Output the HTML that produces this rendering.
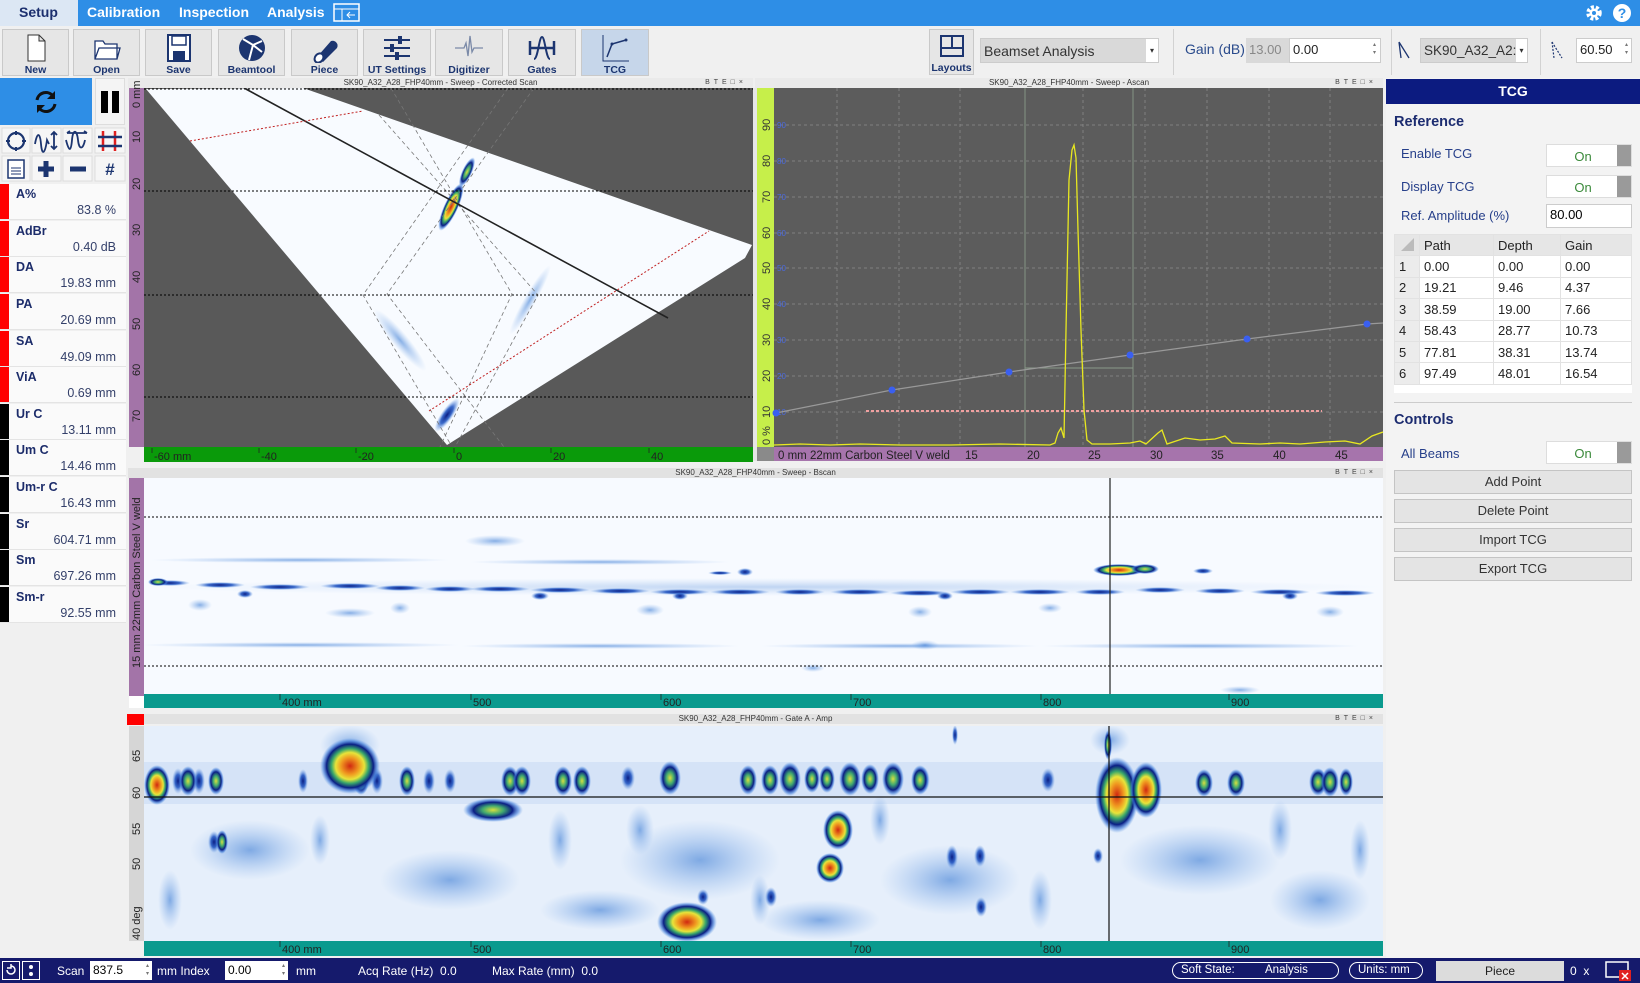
<!DOCTYPE html>
<html><head><meta charset="utf-8">
<style>
*{box-sizing:border-box;margin:0;padding:0}
body{width:1640px;height:983px;overflow:hidden;background:#f0f0f0;font-family:"Liberation Sans",sans-serif;position:relative}
.a{position:absolute}
.menu{left:0;top:0;width:1640px;height:26px;background:#2e8ee6}
.menu span{position:absolute;top:4px;font-size:14px;font-weight:bold;color:#fff}
.tb{background:#e6e6e6;border:1px solid #c9c9c9;top:29px;height:47px;width:67px;text-align:center;font-size:10.5px;font-weight:bold;color:#1c3570}
.tb svg{display:block;margin:3px auto 1px}
.tb.act{background:#c6d6ea}
.lbl{font-size:13px;color:#2a4b8c}
.rd{left:0;width:126px;height:36px;background:#fafafa;border-bottom:1px solid #e4e4e4}
.rd i{position:absolute;left:0;top:0;width:9px;height:35px}
.rd b{position:absolute;left:16px;top:3px;font-size:12.5px;color:#1c2c6a}
.rd s{position:absolute;right:10px;top:19px;font-size:12.5px;color:#34406a;text-decoration:none}
.ttl{height:10px;font-size:8px;color:#333;text-align:center;line-height:10px;background:#eaeaea}
.ttl em{position:absolute;right:6px;top:0;font-style:normal;font-size:7px;letter-spacing:4px;color:#444}
.rp{font-size:13px;color:#263f8a}
.tog{left:1546px;width:86px;height:23px;background:#fff;border:1px solid #ddd}
.tog span{position:absolute;left:0;width:72px;text-align:center;top:4px;font-size:13px;color:#3b8a3b}
.tog i{position:absolute;right:0;top:0;width:14px;height:21px;background:#9a9a9a}
.btn{left:1394px;width:238px;height:24px;background:#e4e4e4;border:1px solid #c4c4c4;text-align:center;font-size:13px;line-height:22px;color:#333}
table{border-collapse:collapse;font-size:13px;color:#222}
td{border:1px solid #e2e2e2;height:21.4px;padding-left:4px;background:#fff}
.sb{font-size:12px;color:#fff}
</style></head><body>
<div class="a menu">
<div class="a" style="left:0;top:0;width:78px;height:26px;background:#dce7f4"></div>
<span style="left:19px;color:#1c2f6e">Setup</span>
<span style="left:87px">Calibration</span><span style="left:179px">Inspection</span><span style="left:267px">Analysis</span>
<svg class="a" style="left:333px;top:3px" width="28" height="20"><rect x="1" y="1" width="25" height="17" fill="none" stroke="#fff" stroke-width="1.5"/><line x1="1" y1="6" x2="26" y2="6" stroke="#fff"/><line x1="9" y1="6" x2="9" y2="18" stroke="#fff"/><path d="M22 12h-8m3-3l-3 3 3 3" stroke="#fff" fill="none"/></svg>
<svg class="a" style="left:1584px;top:3px" width="20" height="20"><circle cx="10" cy="10" r="6" fill="none" stroke="#fff" stroke-width="3.5" stroke-dasharray="3 2"/><circle cx="10" cy="10" r="4.5" fill="#fff"/><circle cx="10" cy="10" r="2" fill="#2e8ee6"/></svg>
<svg class="a" style="left:1612px;top:3px" width="20" height="20"><circle cx="10" cy="10" r="9" fill="#fff"/><text x="10" y="15" font-size="14" font-weight="bold" text-anchor="middle" fill="#2e8ee6" font-family="Liberation Sans">?</text></svg>
</div>

<div class="a tb" style="left:2px"><svg width="26" height="30"><path d="M5 2h11l6 6v20H5z M16 2v6h6" fill="#fff" stroke="#333"/></svg>New</div>
<div class="a tb" style="left:73px"><svg width="30" height="30"><path d="M3 8h8l2 3h12v15H3z M3 26l4-11h21l-3 11" fill="#fff" stroke="#1c3570" stroke-width="1.3"/></svg>Open</div>
<div class="a tb" style="left:145px"><svg width="28" height="30"><rect x="3" y="2" width="22" height="26" fill="#fff" stroke="#1c3570" stroke-width="2"/><rect x="7" y="3" width="14" height="9" fill="none" stroke="#1c3570" stroke-width="1.5"/><rect x="8" y="18" width="12" height="9" fill="#1c3570"/></svg>Save</div>
<div class="a tb" style="left:218px"><svg width="32" height="30"><circle cx="16" cy="15" r="13" fill="#1c3570"/><path d="M7 6l10 6 9-4M17 12l-4 15M17 12l9 7" stroke="#fff" stroke-width="2" fill="none"/></svg>Beamtool</div>
<div class="a tb" style="left:291px"><svg width="32" height="30"><path d="M8 24l14-16a5 5 0 0 1 6 7L14 29z" fill="#1c3570"/><ellipse cx="10" cy="25" rx="4" ry="5" fill="#fff" stroke="#1c3570" stroke-width="2" transform="rotate(40 10 25)"/></svg>Piece</div>
<div class="a tb" style="left:363px;width:68px"><svg width="32" height="30"><path d="M3 7h26M3 15h26M3 23h26" stroke="#1c3570" stroke-width="2"/><rect x="17" y="3" width="4" height="8" fill="#1c3570"/><rect x="9" y="11" width="4" height="8" fill="#1c3570"/><rect x="14" y="19" width="4" height="8" fill="#1c3570"/></svg>UT Settings</div>
<div class="a tb" style="left:435px;width:68px"><svg width="32" height="30"><path d="M2 15h9l2-5 2 13 2-20 2 16 2-4h9" stroke="#7b8aa8" stroke-width="1.3" fill="none"/></svg>Digitizer</div>
<div class="a tb" style="left:508px;width:68px"><svg width="32" height="30"><path d="M4 8v14M28 8v14M4 15h24" stroke="#1c3570" stroke-width="2.5"/><path d="M8 26c4 0 5-22 8-22s4 22 8 22" stroke="#1c3570" stroke-width="2" fill="none"/></svg>Gates</div>
<div class="a tb act" style="left:581px;width:68px"><svg width="32" height="30"><path d="M4 2v26h26" stroke="#1c3570" fill="none"/><path d="M8 24l5-13 14-4" stroke="#1c3570" stroke-width="1.5" fill="none"/><circle cx="13" cy="11" r="1.5" fill="#1c3570"/><circle cx="27" cy="7" r="1.5" fill="#1c3570"/></svg>TCG</div>
<div class="a tb" style="left:929px;width:45px;top:29px;height:46px"><svg width="28" height="28"><rect x="3" y="3" width="22" height="20" fill="none" stroke="#1c3570" stroke-width="2"/><path d="M14 3v12M3 15h22" stroke="#1c3570" stroke-width="2"/></svg>Layouts</div>
<div class="a" style="left:980px;top:38px;width:179px;height:25px;background:#d9d9d9;border:1px solid #ccc;font-size:14px;color:#333;padding:4px 3px">Beamset Analysis<span style="position:absolute;right:0;top:0;width:12px;height:23px;background:#fff;font-size:8px;text-align:center;line-height:23px">▾</span></div>
<div class="a" style="left:1173px;top:29px;width:1px;height:46px;background:#d2d2d2"></div>
<div class="a lbl" style="left:1185px;top:41px;font-size:14px">Gain (dB)</div>
<div class="a" style="left:1246px;top:38px;width:43px;height:25px;background:#d9d9d9;font-size:13px;color:#888;padding:4px 3px">13.00</div>
<div class="a" style="left:1289px;top:38px;width:92px;height:25px;background:#fff;border:1px solid #ccc;font-size:13px;color:#222;padding:3px 3px">0.00<span style="position:absolute;right:4px;top:2px;font-size:6px;line-height:8px;color:#777">▴<br>▾</span></div>
<div class="a" style="left:1391px;top:29px;width:1px;height:46px;background:#d2d2d2"></div>
<svg class="a" style="left:1396px;top:40px" width="16" height="20"><path d="M3 2l2 16M3 2l10 16" stroke="#1c3570" stroke-width="1.3" fill="none"/></svg>
<div class="a" style="left:1420px;top:38px;width:108px;height:25px;background:#d9d9d9;border:1px solid #ccc;font-size:13.5px;color:#333;padding:4px 3px">SK90_A32_A2:<span style="position:absolute;right:0;top:0;width:11px;height:23px;background:#fff;font-size:8px;text-align:center;line-height:23px">▾</span></div>
<div class="a" style="left:1540px;top:29px;width:1px;height:46px;background:#d2d2d2"></div>
<svg class="a" style="left:1549px;top:40px" width="18" height="20"><path d="M3 2l2 16M3 2l10 16" stroke="#1c3570" stroke-width="1.2" fill="none" stroke-dasharray="2 1.5"/></svg>
<div class="a" style="left:1576px;top:38px;width:56px;height:25px;background:#fff;border:1px solid #ccc;font-size:13px;color:#222;padding:3px 3px">60.50<span style="position:absolute;right:3px;top:2px;font-size:6px;line-height:8px;color:#777">▴<br>▾</span></div>

<div class="a" style="left:0;top:78px;width:92px;height:47px;background:#2e8ee6"></div>
<svg class="a" style="left:31px;top:88px" width="30" height="28"><path d="M6 12a9 9 0 0 1 16-4" stroke="#111" stroke-width="3" fill="none"/><path d="M24 3v8h-8z" fill="#111"/><path d="M24 16a9 9 0 0 1-16 4" stroke="#111" stroke-width="3" fill="none"/><path d="M6 25v-8h8z" fill="#111"/></svg>
<div class="a" style="left:95px;top:78px;width:30px;height:47px;background:#f4f4f4;border:1px solid #ddd"></div>
<div class="a" style="left:101px;top:91px;width:7px;height:22px;background:#000"></div><div class="a" style="left:112px;top:91px;width:7px;height:22px;background:#000"></div>
<svg class="a" style="left:0;top:126px" width="128" height="58">
<g fill="#f6f6f6" stroke="#ddd"><rect x="2" y="2" width="28" height="25"/><rect x="32" y="2" width="29" height="25"/><rect x="63" y="2" width="29" height="25"/><rect x="95" y="2" width="30" height="25"/><rect x="2" y="30" width="28" height="25"/><rect x="32" y="30" width="29" height="25"/><rect x="63" y="30" width="29" height="25"/><rect x="95" y="30" width="30" height="25"/></g>
<circle cx="16" cy="15" r="8" fill="none" stroke="#1c3570" stroke-width="2.2"/><path d="M16 5v4M16 21v4M6 15h4M22 15h4" stroke="#1c3570" stroke-width="2"/>
<path d="M35 18c2-12 5-12 6 0s4 10 6-4l2 4M54 6v17M51 9l3-3 3 3M51 20l3 3 3-3" stroke="#1c3570" stroke-width="1.8" fill="none"/>
<path d="M66 14c3 12 5 12 6 0s5-10 6 0 5 10 7 0M67 7h20M67 7l3-2M87 7l-3-2" stroke="#1c3570" stroke-width="1.8" fill="none"/>
<path d="M103 5v20M115 5v20" stroke="#e02020" stroke-width="2.5"/><path d="M98 11h24M98 20h24" stroke="#1c3570" stroke-width="2.5"/>
<rect x="8" y="34" width="16" height="18" fill="#fff" stroke="#1c3570" stroke-width="1.5"/><path d="M11 42h10M11 45h10M11 48h10" stroke="#1c3570"/>
<path d="M46 35v16M38 43h16" stroke="#1c3570" stroke-width="5"/>
<path d="M70 43h16" stroke="#1c3570" stroke-width="5"/>
<text x="110" y="49" font-size="17" font-weight="bold" text-anchor="middle" fill="#1c3570" font-family="Liberation Sans">#</text>
</svg>
<div class="a rd" style="top:184px"><i style="background:#f00"></i><b>A%</b><s>83.8 %</s></div>
<div class="a rd" style="top:221px"><i style="background:#f00"></i><b>AdBr</b><s>0.40 dB</s></div>
<div class="a rd" style="top:257px"><i style="background:#f00"></i><b>DA</b><s>19.83 mm</s></div>
<div class="a rd" style="top:294px"><i style="background:#f00"></i><b>PA</b><s>20.69 mm</s></div>
<div class="a rd" style="top:331px"><i style="background:#f00"></i><b>SA</b><s>49.09 mm</s></div>
<div class="a rd" style="top:367px"><i style="background:#f00"></i><b>ViA</b><s>0.69 mm</s></div>
<div class="a rd" style="top:404px"><i style="background:#000"></i><b>Ur C</b><s>13.11 mm</s></div>
<div class="a rd" style="top:440px"><i style="background:#000"></i><b>Um C</b><s>14.46 mm</s></div>
<div class="a rd" style="top:477px"><i style="background:#000"></i><b>Um-r C</b><s>16.43 mm</s></div>
<div class="a rd" style="top:514px"><i style="background:#000"></i><b>Sr</b><s>604.71 mm</s></div>
<div class="a rd" style="top:550px"><i style="background:#000"></i><b>Sm</b><s>697.26 mm</s></div>
<div class="a rd" style="top:587px"><i style="background:#000"></i><b>Sm-r</b><s>92.55 mm</s></div>

<div class="a ttl" style="left:128px;top:78px;width:625px">SK90_A32_A28_FHP40mm - Sweep - Corrected Scan<em>BTE□×</em></div>
<div class="a ttl" style="left:755px;top:78px;width:628px">SK90_A32_A28_FHP40mm - Sweep - Ascan<em>BTE□×</em></div>
<div class="a ttl" style="left:128px;top:468px;width:1255px;background:#e2e2e2">SK90_A32_A28_FHP40mm - Sweep - Bscan<em>BTE□×</em></div>
<div class="a ttl" style="left:128px;top:714px;width:1255px;background:#e2e2e2">SK90_A32_A28_FHP40mm - Gate A - Amp<em>BTE□×</em></div>
<div class="a" style="left:127px;top:714px;width:17px;height:11px;background:#f00"></div>

<svg class="a" style="left:0;top:0" width="1640" height="983" font-family="Liberation Sans">
<defs>
<radialGradient id="hot"><stop offset="0" stop-color="#d02810"/><stop offset="0.3" stop-color="#f09a20"/><stop offset="0.48" stop-color="#e8e43a"/><stop offset="0.62" stop-color="#3aa86a"/><stop offset="0.78" stop-color="#0a1e84"/><stop offset="0.9" stop-color="#3a78d8" stop-opacity=".6"/><stop offset="1" stop-color="#6aa0e8" stop-opacity="0"/></radialGradient>
<radialGradient id="grn"><stop offset="0" stop-color="#d8e040"/><stop offset="0.35" stop-color="#40a870"/><stop offset="0.65" stop-color="#0a1e84"/><stop offset="0.85" stop-color="#3a78d8" stop-opacity=".6"/><stop offset="1" stop-color="#6aa0e8" stop-opacity="0"/></radialGradient>
<radialGradient id="dk"><stop offset="0" stop-color="#0a1e84"/><stop offset="0.5" stop-color="#1a50c0" stop-opacity=".85"/><stop offset="1" stop-color="#6aa0e8" stop-opacity="0"/></radialGradient>
<radialGradient id="sf"><stop offset="0" stop-color="#2a70d0" stop-opacity=".55"/><stop offset="1" stop-color="#6aa0e8" stop-opacity="0"/></radialGradient>
<clipPath id="cs"><rect x="144" y="88" width="609" height="359"/></clipPath>
<clipPath id="bs"><rect x="144" y="478" width="1239" height="216"/></clipPath>
<clipPath id="cc"><rect x="144" y="726" width="1239" height="215"/></clipPath>
</defs>

<rect x="129" y="88" width="15" height="359" fill="#a374a8"/>
<g font-size="11" fill="#222">
<text transform="translate(140,108) rotate(-90)">0 mm</text>
<text transform="translate(140,143) rotate(-90)">10</text><text transform="translate(140,190) rotate(-90)">20</text><text transform="translate(140,236) rotate(-90)">30</text><text transform="translate(140,283) rotate(-90)">40</text><text transform="translate(140,330) rotate(-90)">50</text><text transform="translate(140,376) rotate(-90)">60</text><text transform="translate(140,422) rotate(-90)">70</text>
</g>
<rect x="144" y="88" width="609" height="359" fill="#595959"/>
<g clip-path="url(#cs)">
<polygon points="146,89 303,88 752,245 745,258 447,445" fill="#f8fbff"/>
<ellipse cx="400" cy="340" rx="40" ry="8" fill="url(#sf)" transform="rotate(50 400 340)"/>
<ellipse cx="530" cy="300" rx="40" ry="6" fill="url(#sf)" transform="rotate(-60 530 300)"/>
<ellipse cx="451" cy="207" rx="26" ry="7" fill="url(#hot)" transform="rotate(-65 451 207)"/>
<ellipse cx="467" cy="172" rx="16" ry="5" fill="url(#grn)" transform="rotate(-65 467 172)"/>
<ellipse cx="447" cy="415" rx="20" ry="6" fill="url(#dk)" transform="rotate(-55 447 415)"/>
<g stroke="#777" stroke-dasharray="4 3" fill="none" stroke-width="0.8">
<polyline points="379,115 538,295 455,447"/><polyline points="391,88 512,294 440,447"/><polyline points="508,88 363,295 451,445"/><polyline points="534,88 387,294 504,447"/>
</g>
<g stroke="#000" stroke-dasharray="2 2" stroke-width="1"><line x1="144" y1="89" x2="753" y2="89"/><line x1="144" y1="191" x2="753" y2="191"/><line x1="144" y1="295" x2="753" y2="295"/><line x1="144" y1="397" x2="753" y2="397"/></g>
<line x1="244" y1="88" x2="668" y2="318" stroke="#222" stroke-width="1.6"/>
<g stroke="#c02020" stroke-dasharray="2 2" stroke-width="1"><line x1="190" y1="141" x2="363" y2="111"/><line x1="429" y1="411" x2="709" y2="231"/></g>
</g>
<rect x="144" y="447" width="609" height="15" fill="#0a9a0a"/>
<g font-size="11" fill="#222" stroke="#222" stroke-width="0.8">
<line x1="152" y1="448" x2="152" y2="453"/><line x1="259" y1="448" x2="259" y2="453"/><line x1="356" y1="448" x2="356" y2="453"/><line x1="454" y1="448" x2="454" y2="453"/><line x1="551" y1="448" x2="551" y2="453"/><line x1="649" y1="448" x2="649" y2="453"/></g>
<g font-size="11" fill="#222"><text x="154" y="460">-60 mm</text><text x="261" y="460">-40</text><text x="358" y="460">-20</text><text x="456" y="460">0</text><text x="553" y="460">20</text><text x="651" y="460">40</text></g>

<rect x="753" y="88" width="4" height="373" fill="#e6e6e6"/>
<rect x="757" y="88" width="17" height="359" fill="#c6ef4a"/>
<g font-size="11" fill="#333">
<text transform="translate(770,131) rotate(-90)">90</text><text transform="translate(770,167) rotate(-90)">80</text><text transform="translate(770,203) rotate(-90)">70</text><text transform="translate(770,239) rotate(-90)">60</text><text transform="translate(770,274) rotate(-90)">50</text><text transform="translate(770,310) rotate(-90)">40</text><text transform="translate(770,346) rotate(-90)">30</text><text transform="translate(770,382) rotate(-90)">20</text><text transform="translate(770,418) rotate(-90)">10</text><text transform="translate(770,445) rotate(-90)">0 %</text>
</g>
<rect x="774" y="88" width="609" height="359" fill="#5c5c5c"/>
<g stroke="#8a8a8a" stroke-dasharray="3 3" stroke-width="0.8">
<line x1="837" y1="88" x2="837" y2="447"/><line x1="899" y1="88" x2="899" y2="447"/><line x1="960" y1="88" x2="960" y2="447"/><line x1="1083" y1="88" x2="1083" y2="447"/><line x1="1145" y1="88" x2="1145" y2="447"/><line x1="1207" y1="88" x2="1207" y2="447"/><line x1="1269" y1="88" x2="1269" y2="447"/><line x1="1330" y1="88" x2="1330" y2="447"/>
<line x1="774" y1="125" x2="1383" y2="125"/><line x1="774" y1="161" x2="1383" y2="161"/><line x1="774" y1="197" x2="1383" y2="197"/><line x1="774" y1="233" x2="1383" y2="233"/><line x1="774" y1="268" x2="1383" y2="268"/><line x1="774" y1="304" x2="1383" y2="304"/><line x1="774" y1="340" x2="1383" y2="340"/><line x1="774" y1="376" x2="1383" y2="376"/><line x1="774" y1="412" x2="1383" y2="412"/>
</g>
<g stroke="#8a9a8a" stroke-width="0.9"><line x1="1025" y1="88" x2="1025" y2="447"/><line x1="1133" y1="88" x2="1133" y2="447"/><line x1="1025" y1="368" x2="1133" y2="368"/></g>
<g fill="#4a6ae0" font-size="8"><text x="777" y="128">90</text><text x="777" y="164">80</text><text x="777" y="200">70</text><text x="777" y="236">60</text><text x="777" y="271">50</text><text x="777" y="307">40</text><text x="777" y="343">30</text><text x="777" y="379">20</text><text x="777" y="415">10</text></g>
<polyline points="776,413 892,390 1009,372 1130,355 1247,339 1367,324 1383,323" stroke="#999" stroke-width="1.2" fill="none"/>
<g fill="#3a5ff0"><circle cx="776" cy="413" r="3.5"/><circle cx="892" cy="390" r="3.5"/><circle cx="1009" cy="372" r="3.5"/><circle cx="1130" cy="355" r="3.5"/><circle cx="1247" cy="339" r="3.5"/><circle cx="1367" cy="324" r="3.5"/></g>
<line x1="866" y1="411" x2="1322" y2="411" stroke="#f0a0a0" stroke-width="2" stroke-dasharray="3 2"/>
<polyline fill="none" stroke="#e8e820" stroke-width="1.3" points="774,445 800,444 830,445 860,444 900,445 950,445 1000,444 1050,445 1055,443 1058,433 1061,428 1064,438 1066,330 1069,180 1072,150 1074,145 1076,158 1078,230 1081,330 1084,410 1087,440 1092,444 1110,444 1130,443 1140,441 1146,444 1158,433 1162,430 1167,444 1185,438 1200,440 1215,439 1225,436 1232,443 1260,444 1280,443 1300,444 1325,442 1345,441 1360,444 1372,436 1383,432"/>
<rect x="757" y="447" width="17" height="14" fill="#8a8a8a"/>
<rect x="774" y="447" width="609" height="14" fill="#a674ac"/>
<g font-size="11.5" fill="#222"><text x="778" y="459">0 mm 22mm Carbon Steel V weld</text><text x="965" y="459">15</text><text x="1027" y="459">20</text><text x="1088" y="459">25</text><text x="1150" y="459">30</text><text x="1211" y="459">35</text><text x="1273" y="459">40</text><text x="1335" y="459">45</text></g>

<rect x="129" y="478" width="15" height="218" fill="#a374a8"/>
<text transform="translate(140,668) rotate(-90)" font-size="11" fill="#222">15 mm 22mm Carbon Steel V weld</text>
<rect x="144" y="478" width="1239" height="216" fill="#f7faff"/>
<g clip-path="url(#bs)">
<rect x="144" y="578" width="1239" height="18" fill="url(#sf)" opacity=".5"/>
<g fill="url(#dk)">
<ellipse cx="170" cy="583" rx="20" ry="3"/><ellipse cx="220" cy="585" rx="25" ry="3"/><ellipse cx="280" cy="587" rx="30" ry="3"/><ellipse cx="350" cy="586" rx="30" ry="3"/><ellipse cx="400" cy="588" rx="25" ry="3"/><ellipse cx="450" cy="589" rx="25" ry="3"/><ellipse cx="500" cy="589" rx="30" ry="3"/><ellipse cx="560" cy="590" rx="30" ry="3"/><ellipse cx="620" cy="591" rx="30" ry="3"/><ellipse cx="680" cy="592" rx="30" ry="3"/><ellipse cx="740" cy="592" rx="30" ry="3"/><ellipse cx="800" cy="592" rx="25" ry="3"/><ellipse cx="860" cy="592" rx="30" ry="3"/><ellipse cx="920" cy="593" rx="30" ry="3"/><ellipse cx="980" cy="592" rx="30" ry="3"/><ellipse cx="1040" cy="592" rx="30" ry="3"/><ellipse cx="1100" cy="592" rx="25" ry="3"/><ellipse cx="1160" cy="590" rx="25" ry="3"/><ellipse cx="1220" cy="591" rx="25" ry="3"/><ellipse cx="1280" cy="592" rx="30" ry="3"/><ellipse cx="1345" cy="593" rx="30" ry="3"/>
<ellipse cx="745" cy="572" rx="8" ry="4"/><ellipse cx="720" cy="573" rx="12" ry="2"/><ellipse cx="1203" cy="571" rx="10" ry="3"/>
<ellipse cx="245" cy="594" rx="8" ry="4"/><ellipse cx="540" cy="596" rx="9" ry="4"/><ellipse cx="680" cy="596" rx="8" ry="4"/><ellipse cx="945" cy="596" rx="8" ry="4"/><ellipse cx="1290" cy="596" rx="8" ry="4"/>
</g>
<g fill="url(#sf)">
<ellipse cx="495" cy="541" rx="30" ry="6"/><ellipse cx="350" cy="613" rx="25" ry="5"/><ellipse cx="300" cy="645" rx="160" ry="3"/><ellipse cx="600" cy="646" rx="140" ry="3"/><ellipse cx="900" cy="646" rx="140" ry="3"/><ellipse cx="1200" cy="646" rx="160" ry="3"/><ellipse cx="813" cy="668" rx="12" ry="4"/><ellipse cx="1240" cy="690" rx="20" ry="4"/><ellipse cx="300" cy="560" rx="150" ry="3"/><ellipse cx="600" cy="562" rx="130" ry="3"/>
<ellipse cx="200" cy="605" rx="12" ry="6"/><ellipse cx="400" cy="608" rx="10" ry="6"/><ellipse cx="650" cy="610" rx="14" ry="6"/><ellipse cx="920" cy="612" rx="12" ry="6"/><ellipse cx="925" cy="645" rx="14" ry="5"/><ellipse cx="1330" cy="612" rx="14" ry="6"/><ellipse cx="1050" cy="608" rx="12" ry="5"/>
</g>
<ellipse cx="158" cy="582" rx="10" ry="4" fill="url(#grn)"/>
<ellipse cx="1119" cy="570" rx="26" ry="6" fill="url(#hot)"/><ellipse cx="1145" cy="569" rx="14" ry="5" fill="url(#grn)"/>
<g stroke="#000" stroke-dasharray="2 2"><line x1="144" y1="517" x2="1383" y2="517"/><line x1="144" y1="666" x2="1383" y2="666"/></g>
<line x1="1110" y1="478" x2="1110" y2="694" stroke="#222" stroke-width="1.2"/>
</g>
<rect x="144" y="694" width="1239" height="14" fill="#0a9a8e"/>
<rect x="129" y="696" width="15" height="12" fill="#fff"/>
<g stroke="#222" stroke-width="0.8"><line x1="280" y1="694" x2="280" y2="700"/><line x1="471" y1="694" x2="471" y2="700"/><line x1="661" y1="694" x2="661" y2="700"/><line x1="851" y1="694" x2="851" y2="700"/><line x1="1041" y1="694" x2="1041" y2="700"/><line x1="1229" y1="694" x2="1229" y2="700"/></g>
<g font-size="11" fill="#222"><text x="282" y="706">400 mm</text><text x="473" y="706">500</text><text x="663" y="706">600</text><text x="853" y="706">700</text><text x="1043" y="706">800</text><text x="1231" y="706">900</text></g>

<rect x="129" y="726" width="15" height="215" fill="#d6d6d6"/>
<g font-size="11" fill="#222"><text transform="translate(140,762) rotate(-90)">65</text><text transform="translate(140,799) rotate(-90)">60</text><text transform="translate(140,835) rotate(-90)">55</text><text transform="translate(140,870) rotate(-90)">50</text><text transform="translate(140,940) rotate(-90)">40 deg</text></g>
<rect x="144" y="726" width="1239" height="215" fill="#e6effb"/>
<g clip-path="url(#cc)">
<g fill="url(#sf)">
<rect x="144" y="762" width="1239" height="42" fill="#b4cef0" opacity=".35"/>
<ellipse cx="250" cy="850" rx="60" ry="30"/><ellipse cx="450" cy="880" rx="70" ry="30"/><ellipse cx="700" cy="860" rx="80" ry="40"/><ellipse cx="950" cy="880" rx="70" ry="35"/><ellipse cx="1200" cy="860" rx="80" ry="35"/><ellipse cx="1320" cy="900" rx="50" ry="30"/><ellipse cx="350" cy="745" rx="30" ry="20"/><ellipse cx="1110" cy="740" rx="20" ry="15"/><ellipse cx="600" cy="910" rx="60" ry="20"/><ellipse cx="820" cy="920" rx="60" ry="20"/>
<ellipse cx="170" cy="900" rx="12" ry="30"/><ellipse cx="320" cy="840" rx="10" ry="25"/><ellipse cx="560" cy="840" rx="12" ry="30"/><ellipse cx="640" cy="830" rx="14" ry="25"/><ellipse cx="760" cy="900" rx="10" ry="25"/><ellipse cx="1040" cy="900" rx="12" ry="30"/><ellipse cx="1280" cy="830" rx="12" ry="30"/><ellipse cx="1360" cy="850" rx="10" ry="30"/><ellipse cx="880" cy="820" rx="10" ry="25"/>
</g>
<g fill="url(#dk)">
<ellipse cx="178" cy="781" rx="6" ry="13"/><ellipse cx="199" cy="781" rx="6" ry="13"/><ellipse cx="214" cy="781" rx="5" ry="12"/><ellipse cx="303" cy="781" rx="5" ry="12"/><ellipse cx="377" cy="781" rx="6" ry="13"/><ellipse cx="429" cy="781" rx="6" ry="13"/><ellipse cx="450" cy="781" rx="6" ry="12"/><ellipse cx="523" cy="781" rx="6" ry="12"/><ellipse cx="628" cy="778" rx="7" ry="12"/><ellipse cx="923" cy="780" rx="7" ry="13"/><ellipse cx="1048" cy="780" rx="7" ry="12"/><ellipse cx="1320" cy="781" rx="6" ry="12"/><ellipse cx="955" cy="735" rx="3" ry="10"/>
<ellipse cx="214" cy="842" rx="6" ry="11"/><ellipse cx="952" cy="857" rx="6" ry="12"/><ellipse cx="980" cy="856" rx="6" ry="11"/><ellipse cx="981" cy="907" rx="6" ry="10"/><ellipse cx="771" cy="897" rx="6" ry="10"/><ellipse cx="703" cy="897" rx="6" ry="8"/><ellipse cx="1098" cy="856" rx="5" ry="8"/>
</g>
<g fill="url(#grn)">
<ellipse cx="188" cy="781" rx="9" ry="15"/><ellipse cx="216" cy="781" rx="8" ry="14"/><ellipse cx="361" cy="781" rx="8" ry="14"/><ellipse cx="407" cy="781" rx="8" ry="15"/><ellipse cx="510" cy="781" rx="9" ry="15"/><ellipse cx="522" cy="781" rx="9" ry="15"/><ellipse cx="563" cy="781" rx="9" ry="15"/><ellipse cx="582" cy="781" rx="9" ry="15"/><ellipse cx="670" cy="778" rx="11" ry="17"/><ellipse cx="748" cy="780" rx="9" ry="15"/><ellipse cx="770" cy="780" rx="9" ry="15"/><ellipse cx="790" cy="779" rx="11" ry="17"/><ellipse cx="812" cy="779" rx="8" ry="14"/><ellipse cx="827" cy="779" rx="8" ry="14"/><ellipse cx="850" cy="779" rx="11" ry="17"/><ellipse cx="870" cy="779" rx="9" ry="15"/><ellipse cx="893" cy="779" rx="11" ry="17"/><ellipse cx="920" cy="780" rx="9" ry="15"/><ellipse cx="1150" cy="781" rx="7" ry="14"/><ellipse cx="1204" cy="783" rx="9" ry="14"/><ellipse cx="1236" cy="783" rx="9" ry="14"/><ellipse cx="1318" cy="782" rx="9" ry="14"/><ellipse cx="1330" cy="782" rx="9" ry="15"/><ellipse cx="1346" cy="782" rx="7" ry="14"/>
<ellipse cx="493" cy="810" rx="30" ry="12"/><ellipse cx="222" cy="842" rx="6" ry="12"/><ellipse cx="1108" cy="745" rx="4" ry="15"/>
</g>
<g fill="url(#hot)">
<ellipse cx="157" cy="785" rx="13" ry="20"/><ellipse cx="350" cy="766" rx="30" ry="28"/><ellipse cx="838" cy="830" rx="15" ry="20"/><ellipse cx="830" cy="868" rx="14" ry="15"/><ellipse cx="687" cy="922" rx="30" ry="20"/><ellipse cx="1117" cy="795" rx="22" ry="38"/><ellipse cx="1146" cy="790" rx="16" ry="28"/>
</g>
<line x1="144" y1="797" x2="1383" y2="797" stroke="#111" stroke-width="1.2"/>
<line x1="1109" y1="726" x2="1109" y2="941" stroke="#111" stroke-width="1.2"/>
</g>
<rect x="144" y="941" width="1239" height="15" fill="#0a9a8e"/>
<g stroke="#222" stroke-width="0.8"><line x1="280" y1="941" x2="280" y2="947"/><line x1="471" y1="941" x2="471" y2="947"/><line x1="661" y1="941" x2="661" y2="947"/><line x1="851" y1="941" x2="851" y2="947"/><line x1="1041" y1="941" x2="1041" y2="947"/><line x1="1229" y1="941" x2="1229" y2="947"/></g>
<g font-size="11" fill="#222"><text x="282" y="953">400 mm</text><text x="473" y="953">500</text><text x="663" y="953">600</text><text x="853" y="953">700</text><text x="1043" y="953">800</text><text x="1231" y="953">900</text></g>
</svg>

<div class="a" style="left:1386px;top:78px;width:254px;height:880px;background:#f3f3f3"></div>
<div class="a" style="left:1386px;top:79px;width:254px;height:25px;background:#0c1b80;color:#fff;font-weight:bold;font-size:14px;text-align:center;line-height:25px">TCG</div>
<div class="a rp" style="left:1394px;top:114px;font-weight:bold;font-size:14.5px;color:#1c2c70">Reference</div>
<div class="a rp" style="left:1401px;top:146px">Enable TCG</div>
<div class="a tog" style="top:144px"><span>On</span><i></i></div>
<div class="a rp" style="left:1401px;top:179px">Display TCG</div>
<div class="a tog" style="top:175px"><span>On</span><i></i></div>
<div class="a rp" style="left:1401px;top:208px">Ref. Amplitude (%)</div>
<div class="a" style="left:1546px;top:204px;width:86px;height:24px;background:#fff;border:1px solid #ccc;font-size:13px;padding:2px 3px">80.00</div>
<table class="a" style="left:1394px;top:234px;width:238px">
<tr><td style="width:25px;background:#e6e6e6"><svg width="16" height="14"><path d="M15 1v13H2z" fill="#bbb"/></svg></td><td style="width:74px;background:#e6e6e6">Path</td><td style="width:67px;background:#e6e6e6">Depth</td><td style="background:#e6e6e6">Gain</td></tr>
<tr><td style="background:#ececec">1</td><td>0.00</td><td>0.00</td><td>0.00</td></tr>
<tr><td style="background:#ececec">2</td><td>19.21</td><td>9.46</td><td>4.37</td></tr>
<tr><td style="background:#ececec">3</td><td>38.59</td><td>19.00</td><td>7.66</td></tr>
<tr><td style="background:#ececec">4</td><td>58.43</td><td>28.77</td><td>10.73</td></tr>
<tr><td style="background:#ececec">5</td><td>77.81</td><td>38.31</td><td>13.74</td></tr>
<tr><td style="background:#ececec">6</td><td>97.49</td><td>48.01</td><td>16.54</td></tr>
</table>
<div class="a" style="left:1394px;top:385px;width:238px;height:8px;background:#fff"></div>
<div class="a" style="left:1394px;top:402px;width:238px;height:1px;background:#ccc"></div>
<div class="a rp" style="left:1394px;top:412px;font-weight:bold;font-size:14.5px;color:#1c2c70">Controls</div>
<div class="a rp" style="left:1401px;top:446px">All Beams</div>
<div class="a tog" style="top:441px"><span>On</span><i></i></div>
<div class="a btn" style="top:470px">Add Point</div>
<div class="a btn" style="top:499px">Delete Point</div>
<div class="a btn" style="top:528px">Import TCG</div>
<div class="a btn" style="top:557px">Export TCG</div>

<div class="a" style="left:0;top:958px;width:1640px;height:25px;background:#151a6c"></div>
<svg class="a" style="left:2px;top:961px" width="40" height="20"><rect x="0.5" y="0.5" width="17" height="18" fill="none" stroke="#fff"/><path d="M5 9a4 4 0 1 0 4-4M9 3v4H5" stroke="#fff" fill="none" stroke-width="1.5"/><rect x="20.5" y="0.5" width="17" height="18" fill="none" stroke="#fff"/><circle cx="29" cy="6" r="2" fill="#fff"/><circle cx="29" cy="13" r="2" fill="#fff"/></svg>
<div class="a sb" style="left:57px;top:964px">Scan</div>
<div class="a" style="left:90px;top:961px;width:62px;height:19px;background:#fff;font-size:12px;padding:2px 3px">837.5<span style="position:absolute;right:3px;top:1px;font-size:6px;line-height:8px;color:#777">▴<br>▾</span></div>
<div class="a sb" style="left:157px;top:964px">mm Index</div>
<div class="a" style="left:225px;top:961px;width:63px;height:19px;background:#fff;font-size:12px;padding:2px 3px">0.00<span style="position:absolute;right:3px;top:1px;font-size:6px;line-height:8px;color:#777">▴<br>▾</span></div>
<div class="a sb" style="left:296px;top:964px">mm</div>
<div class="a sb" style="left:358px;top:964px">Acq Rate (Hz)&nbsp; 0.0</div>
<div class="a sb" style="left:492px;top:964px">Max Rate (mm)&nbsp; 0.0</div>
<div class="a sb" style="left:1172px;top:962px;width:167px;height:17px;border:1px solid #fff;border-radius:9px;font-size:11.5px;padding:1px 8px">Soft State:<span style="position:absolute;left:92px">Analysis</span></div>
<div class="a sb" style="left:1349px;top:962px;width:74px;height:17px;border:1px solid #fff;border-radius:9px;font-size:11.5px;padding:1px 8px">Units: mm</div>
<div class="a" style="left:1436px;top:961px;width:128px;height:20px;background:#dcdcdc;font-size:12px;text-align:center;line-height:20px;color:#222">Piece</div>
<div class="a sb" style="left:1570px;top:964px">0&nbsp; x</div>
<svg class="a" style="left:1604px;top:960px" width="30" height="22"><rect x="2" y="2" width="22" height="15" fill="none" stroke="#fff" stroke-width="1.5"/><rect x="15" y="10" width="12" height="11" fill="#e02020"/><path d="M18 13l6 6M24 13l-6 6" stroke="#fff" stroke-width="1.5"/></svg>
</body></html>
